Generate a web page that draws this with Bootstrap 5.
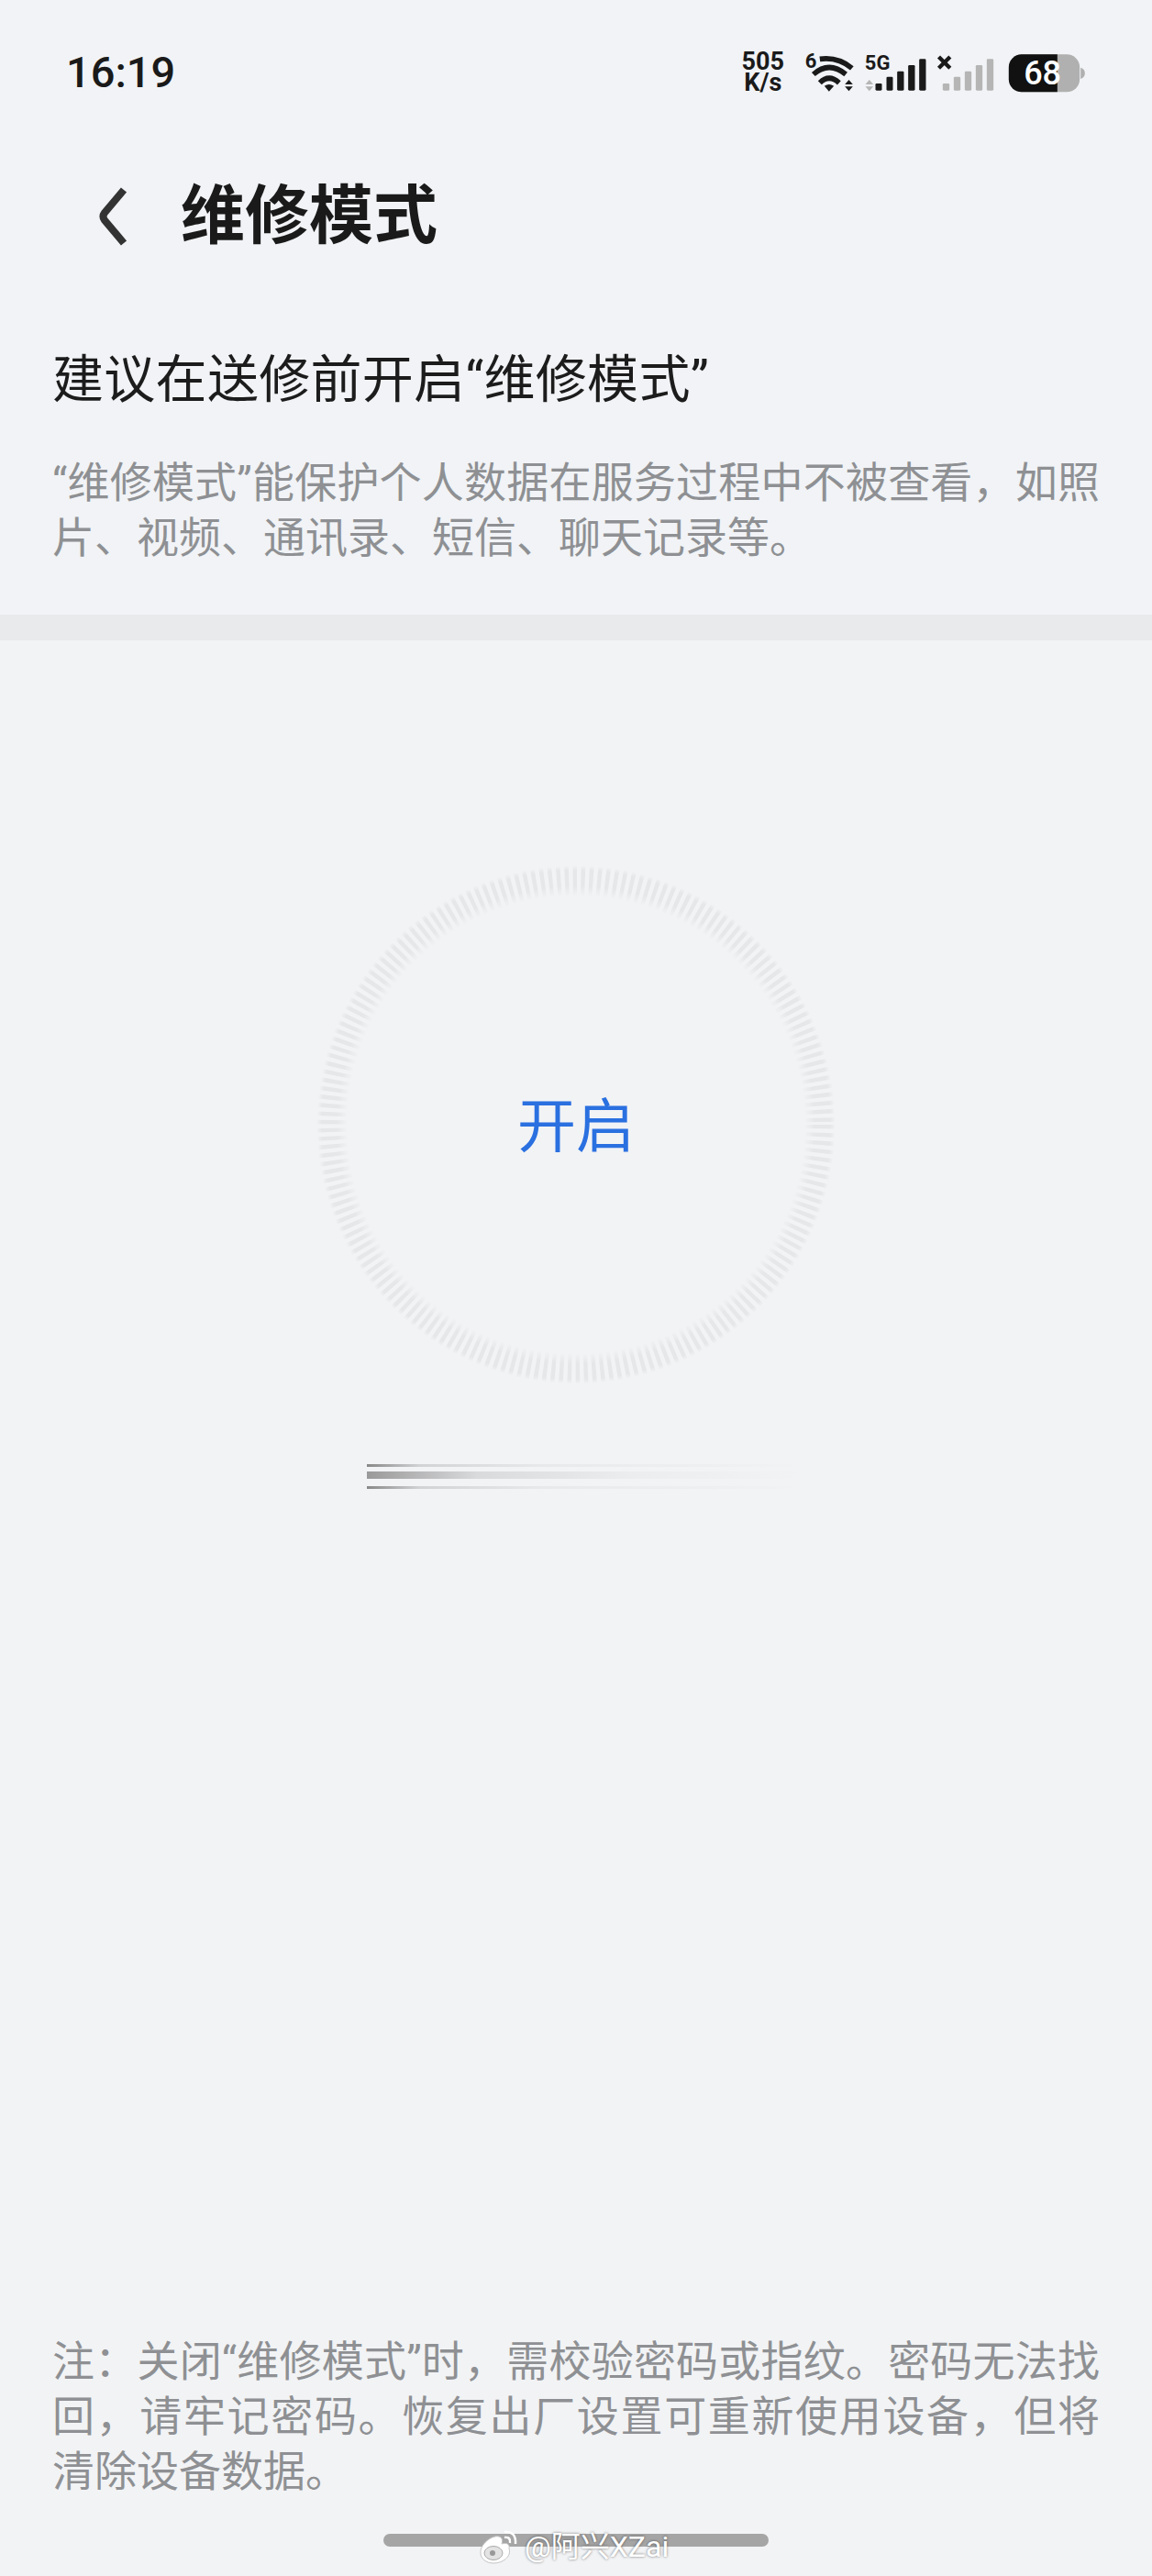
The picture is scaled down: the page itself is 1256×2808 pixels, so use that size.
<!DOCTYPE html>
<html lang="zh-CN">
<head>
  <meta charset="UTF-8">
  <title>维修模式</title>
  <link href="https://cdn.jsdelivr.net/npm/bootstrap@5.3.2/dist/css/bootstrap.min.css" rel="stylesheet">
  <style>
    body { background: #f1f3f6; font-family: "Roboto", "Noto Sans CJK SC", sans-serif; width: 1256px; height: 2808px; overflow: hidden; }
    .status-row { height: 160px; padding: 0 72px 3px 72px; }
    .status-icons { gap: 22px; }
    .clock { font-weight: 500; font-size: 47px; line-height: 1; color: #1a1a1a; }
    .speed { font-weight: 700; font-size: 27px; line-height: 23px; color: #1a1a1a; text-align: center; }
    .title-row { height: 152px; padding-left: 108px; gap: 57px; }
    .page-title { font-size: 70px; font-weight: 700; color: #1a1a1a; margin: 0; line-height: 1; }
    .intro { padding: 0 57px; height: 358px; }
    .intro-head { font-size: 56px; font-weight: 400; color: #1c1c1c; line-height: 80px; margin: 62px 0 0; letter-spacing: .3px; }
    .intro-text { font-size: 46px; color: #8e9093; line-height: 60px; margin: 42px 0 0; }
    .fit-line { display: block; text-align: justify; text-align-last: justify; }
    .band { height: 28px; background: #e9eaec; }
    .main-area { padding-top: 243px; background: #f2f3f5; }
    .ring-box { width: 570px; height: 570px; }
    .ring-label { color: #2a70e0; font-size: 64px; line-height: 1; padding-top: 6px; }
    .streak { width: 480px; height: 34px; margin-top: 81px; margin-left: 24px; filter: blur(.7px); }
    .note { padding: 0 57px; font-size: 46px; color: #8e9093; line-height: 60px; background: #f2f3f5; }
    .foot { background: #f2f3f5; padding-top: 38px; }
    .home-bar { width: 420px; height: 14px; border-radius: 7px; background: #a5a5a5; margin-bottom: 32px; }
    .watermark { left: 522px; top: 2756px; gap: 8px; color: #fff; font-size: 32px; line-height: 40px; text-shadow: 0 0 3px rgba(0,0,0,.55); }
  </style>
</head>
<body class="d-flex flex-column position-relative">

  <div class="status-row d-flex justify-content-between align-items-center">
    <div class="clock">16:19</div>
    <div class="status-icons d-flex align-items-center">
      <div class="speed">505<br>K/s</div>
      <svg width="307" height="56" viewBox="295 60 920 168" fill="#1a1a1a">
        <text x="297" y="128" font-family="Roboto" font-weight="700" font-size="66">6</text>
        <g fill="none" stroke="#1a1a1a" stroke-width="17">
          <path d="M345 100 Q405 92 450 130"/>
          <path d="M324 150 Q375 105 430 150"/>
          <path d="M345 178 Q375 148 408 178"/>
        </g>
        <path d="M360 188 Q375 178 391 188 L375 206Z"/>
        <path d="M440 168 L453 183 H427Z M440 205 L453 190 H427Z"/>
        <text x="492" y="134" font-family="Roboto" font-weight="700" font-size="66">5G</text>
        <path d="M507 168 L520 183 H494Z M507 205 L520 190 H494Z" fill="#b5b5b5"/>
        <rect x="527" y="180" width="21" height="23" rx="4"/>
        <rect x="563" y="158" width="21" height="45" rx="4"/>
        <rect x="598" y="140" width="22" height="63" rx="4"/>
        <rect x="634" y="120" width="22" height="83" rx="4"/>
        <rect x="670" y="100" width="22" height="103" rx="4"/>
        <path d="M734 93 L771 130 M771 93 L734 130" stroke="#1a1a1a" stroke-width="13" fill="none"/>
        <g fill="#b5b5b5">
          <rect x="747" y="180" width="22" height="23" rx="4"/>
          <rect x="783" y="158" width="22" height="45" rx="4"/>
          <rect x="819" y="140" width="22" height="63" rx="4"/>
          <rect x="855" y="120" width="22" height="83" rx="4"/>
          <rect x="891" y="100" width="22" height="103" rx="4"/>
        </g>
        <rect x="963" y="85" width="232" height="123" rx="42" fill="#b0b0b0"/>
        <path d="M1122 85 H1005 A42 42 0 0 0 963 127 V166 A42 42 0 0 0 1005 208 H1122Z" fill="#111"/>
        <path d="M1198 128 Q1212 132 1212 146 Q1212 160 1198 165Z" fill="#b0b0b0"/>
        <text x="1012" y="184" font-family="Roboto" font-weight="500" font-size="108" fill="#fff">68</text>
      </svg>
    </div>
  </div>

  <div class="title-row d-flex align-items-center">
    <svg width="32" height="66" viewBox="0 0 32 66">
      <path d="M27 4 L6 29 Q3 33 6 37 L27 62" fill="none" stroke="#333" stroke-width="8"/>
    </svg>
    <h1 class="page-title">维修模式</h1>
  </div>

  <div class="intro">
    <h2 class="intro-head">建议在送修前开启“维修模式”</h2>
    <p class="intro-text"><span class="fit-line">“维修模式”能保护个人数据在服务过程中不被查看，如照</span>片、视频、通讯录、短信、聊天记录等。</p>
  </div>

  <div class="band"></div>

  <div class="main-area d-flex flex-column align-items-center flex-grow-1">
    <div class="ring-box position-relative d-flex align-items-center justify-content-center">
      <svg class="position-absolute top-0 start-0" width="570" height="570" viewBox="0 0 570 570">
        <defs>
          <radialGradient id="tickFade" gradientUnits="userSpaceOnUse" cx="285" cy="285" r="283">
            <stop offset=".88" stop-color="#f2f3f5"/>
            <stop offset=".92" stop-color="#e6e7e9"/>
            <stop offset=".98" stop-color="#e6e7e9"/>
            <stop offset="1" stop-color="#f2f3f5"/>
          </radialGradient>
        </defs>
        <circle cx="285" cy="285" r="266" fill="none" stroke="url(#tickFade)" stroke-width="32" stroke-dasharray="4.4 4.4"/>
      </svg>
      <span class="ring-label">开启</span>
    </div>
    <svg class="streak" viewBox="0 0 480 34">
      <defs>
        <linearGradient id="fadeLine"><stop offset="0" stop-color="#888"/><stop offset=".12" stop-color="#d2d3d5"/><stop offset=".4" stop-color="#e8e9eb"/><stop offset="1" stop-color="#f2f3f5"/></linearGradient>
        <linearGradient id="fadeMid"><stop offset="0" stop-color="#999"/><stop offset=".25" stop-color="#d9dadc"/><stop offset=".6" stop-color="#ecedef"/><stop offset="1" stop-color="#f2f3f5"/></linearGradient>
      </defs>
      <rect x="0" y="4" width="480" height="3" fill="url(#fadeLine)"/>
      <rect x="0" y="12" width="480" height="8" fill="url(#fadeMid)"/>
      <rect x="0" y="28" width="480" height="3" fill="url(#fadeLine)"/>
    </svg>
  </div>

  <p class="note mb-0"><span class="fit-line">注：关闭“维修模式”时，需校验密码或指纹。密码无法找</span><span class="fit-line">回，请牢记密码。恢复出厂设置可重新使用设备，但将</span>清除设备数据。</p>

  <div class="foot d-flex justify-content-center">
    <div class="home-bar"></div>
  </div>

  <div class="watermark position-absolute d-flex align-items-center">
    <svg width="42" height="38" viewBox="0 0 42 38">
      <path d="M2 26 C1 17 14 6 22 8 C26 9 26 13 25 16 C31 14 34 17 33 21 C36 30 26 37 16 37 C8 37 2 32 2 26Z" fill="#fff" stroke="#c4c4c4"/>
      <ellipse cx="16" cy="26" rx="10" ry="7.5" fill="#e3e3e3" stroke="#aaa"/>
      <circle cx="15" cy="26" r="3" fill="#999"/>
      <path d="M28 3 Q41 2 40 16 M28 9 Q35 8 34 15" fill="none" stroke="#fff" stroke-width="2.5"/>
    </svg>
    <span>@阿兴XZai</span>
  </div>

</body>
</html>
